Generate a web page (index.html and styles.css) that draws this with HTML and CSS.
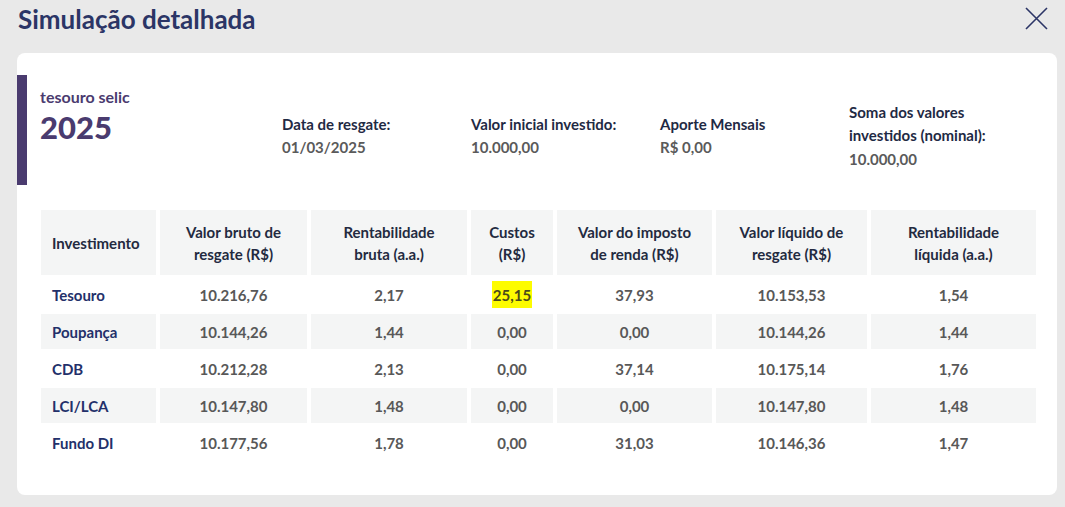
FILE: index.html
```html
<!DOCTYPE html>
<html lang="pt-BR">
<head>
<meta charset="utf-8">
<title>Simulação detalhada</title>
<link rel="stylesheet" href="styles.css">
</head>
<body>
<header class="modal-head">
  <h1 class="modal-title">Simulação detalhada</h1>
  <button class="close" aria-label="Fechar">
    <svg width="24" height="24" viewBox="0 0 24 24"><path d="M2 1 L23 22 M23 1 L2 22" stroke="#2c3566" stroke-width="1.6" fill="none"/></svg>
  </button>
</header>
<main class="card">
  <section class="summary">
    <div class="product">
      <div class="product-name">tesouro selic</div>
      <div class="product-year">2025</div>
    </div>
    <div class="info">
      <div class="info-label">Data de resgate:</div>
      <div class="info-value">01/03/2025</div>
    </div>
    <div class="info">
      <div class="info-label">Valor inicial investido:</div>
      <div class="info-value">10.000,00</div>
    </div>
    <div class="info">
      <div class="info-label">Aporte Mensais</div>
      <div class="info-value">R$ 0,00</div>
    </div>
    <div class="info info-wide">
      <div class="info-label">Soma dos valores investidos (nominal):</div>
      <div class="info-value">10.000,00</div>
    </div>
  </section>
  <table class="grid">
    <colgroup>
      <col class="c1"><col class="c2"><col class="c3"><col class="c4"><col class="c5"><col class="c6"><col class="c7">
    </colgroup>
    <thead>
      <tr>
        <th class="left">Investimento</th>
        <th>Valor bruto de<br>resgate (R$)</th>
        <th>Rentabilidade<br>bruta (a.a.)</th>
        <th>Custos<br>(R$)</th>
        <th>Valor do imposto<br>de renda (R$)</th>
        <th>Valor líquido de<br>resgate (R$)</th>
        <th>Rentabilidade<br>líquida (a.a.)</th>
      </tr>
    </thead>
    <tbody>
      <tr><td class="name">Tesouro</td><td>10.216,76</td><td>2,17</td><td><span class="mark">25,15</span></td><td>37,93</td><td>10.153,53</td><td>1,54</td></tr>
      <tr class="alt"><td class="name">Poupança</td><td>10.144,26</td><td>1,44</td><td>0,00</td><td>0,00</td><td>10.144,26</td><td>1,44</td></tr>
      <tr><td class="name">CDB</td><td>10.212,28</td><td>2,13</td><td>0,00</td><td>37,14</td><td>10.175,14</td><td>1,76</td></tr>
      <tr class="alt"><td class="name">LCI/LCA</td><td>10.147,80</td><td>1,48</td><td>0,00</td><td>0,00</td><td>10.147,80</td><td>1,48</td></tr>
      <tr><td class="name">Fundo DI</td><td>10.177,56</td><td>1,78</td><td>0,00</td><td>31,03</td><td>10.146,36</td><td>1,47</td></tr>
    </tbody>
  </table>
</main>
</body>
</html>
```

FILE: styles.css
```css
* { box-sizing: border-box; }
html, body { margin: 0; padding: 0; }
body {
  background: #e9e9e9;
  font-family: Lato, "Open Sans", sans-serif;
  width: 1065px;
  height: 507px;
  overflow: hidden;
}
.modal-head {
  height: 53px;
  display: flex;
  align-items: center;
  justify-content: space-between;
  padding: 0 17px 15px 18px;
}
.modal-title {
  margin: 0;
  font-size: 26px;
  font-weight: 700;
  color: #2b3566;
}
.close {
  border: 0;
  background: transparent;
  padding: 0;
  width: 24px;
  height: 24px;
}
.close svg { display: block; }
.card {
  margin: 0 8px 0 17px;
  height: 442px;
  background: #fff;
  border-radius: 8px;
  padding-top: 22px;
}
.summary {
  display: flex;
  align-items: center;
  height: 110px;
  border-left: 10px solid #4a3b6f;
}
.product {
  width: 255px;
  padding-left: 13px;
  align-self: flex-start;
  padding-top: 12px;
}
.product-name {
  font-size: 16px;
  font-weight: 700;
  color: #4a3b6f;
  line-height: 20px;
}
.product-year {
  font-size: 31px;
  font-weight: 900;
  color: #4a3b6f;
  line-height: 40px;
}
.info {
  width: 189px;
  font-size: 15px;
  line-height: 23.5px;
  margin-top: 12px;
}
.info-wide { width: 175px; }
.info-label {
  font-weight: 700;
  color: #1f2a44;
}
.info-value {
  font-weight: 700;
  color: #5a5a5a;
}
.grid {
  margin: 23px 0 0 20px;
  border-collapse: separate;
  border-spacing: 4px 2px;
  table-layout: fixed;
  width: 1003px;
  font-size: 15px;
}
.c1 { width: 115px; }
.c2 { width: 147px; }
.c3 { width: 156px; }
.c4 { width: 82px; }
.c5 { width: 155px; }
.c6 { width: 151px; }
.c7 { width: 165px; }
.grid th {
  background: #f4f5f5;
  height: 65px;
  font-weight: 700;
  color: #232a40;
  line-height: 22px;
  padding: 0;
  text-align: center;
}
.grid th.left,
.grid td.name {
  text-align: left;
  padding-left: 11px;
}
.grid td {
  height: 35px;
  padding: 0;
  text-align: center;
  font-weight: 700;
  color: #585858;
}
.grid td.name { color: #23306a; }
.grid tr.alt td { background: #f4f5f5; }
.mark {
  background: #fdfc00;
  padding: 5px 1px 4px;
  color: #4a4a1a;
}
```
